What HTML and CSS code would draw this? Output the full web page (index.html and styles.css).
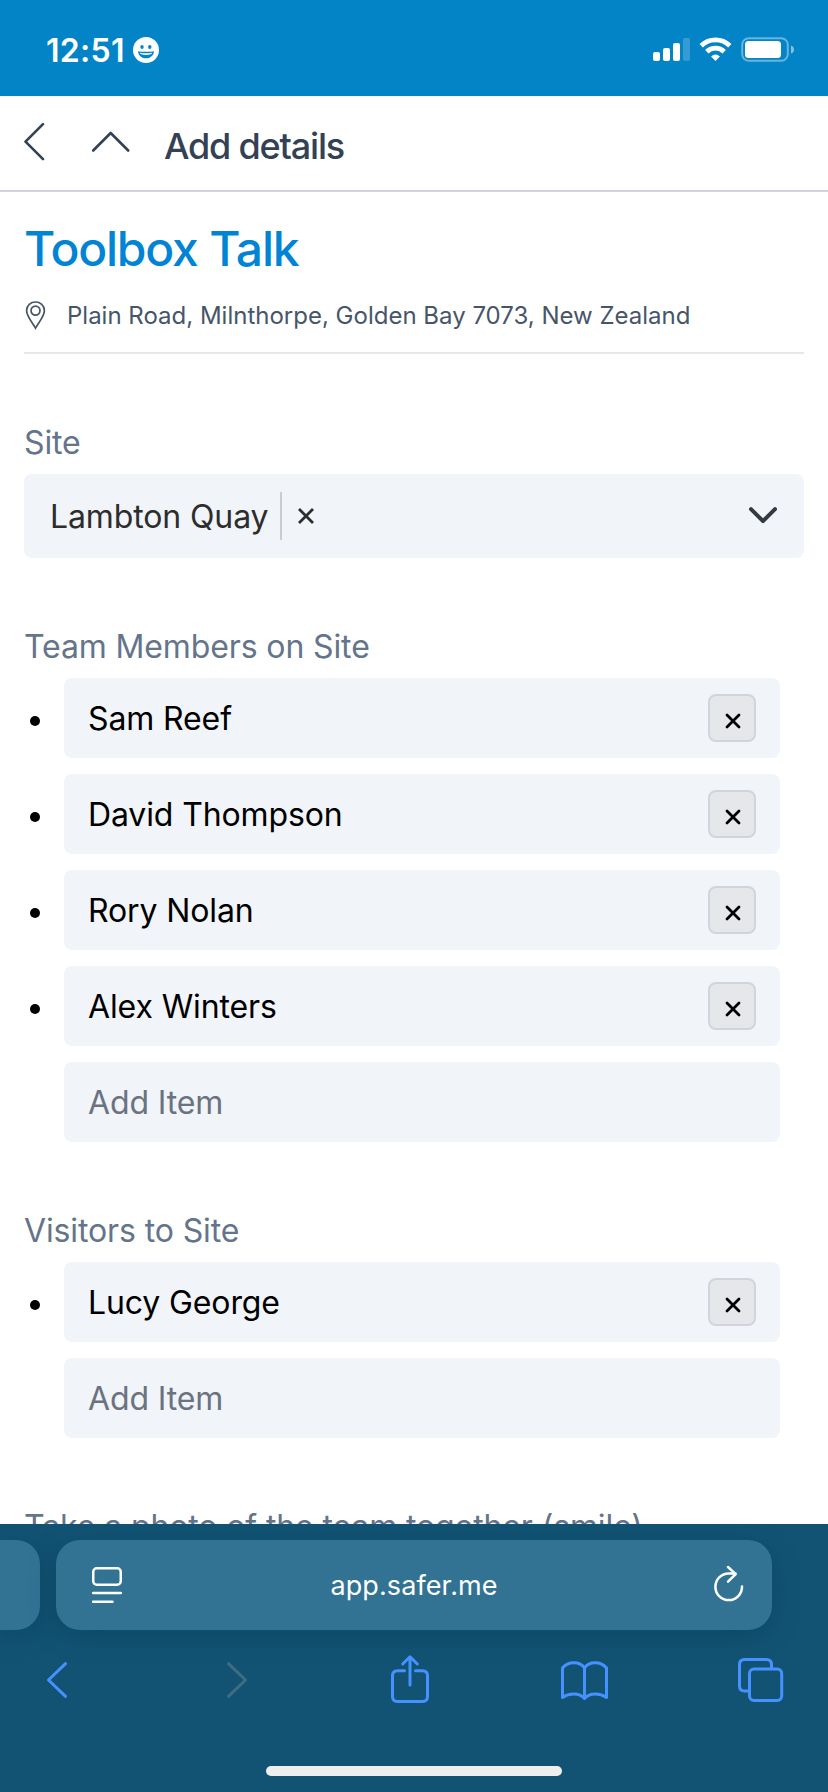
FILE: index.html
```html
<!DOCTYPE html>
<html lang="en">
<head>
<meta charset="utf-8">
<title>Toolbox Talk</title>
<link rel="stylesheet" href="styles.css">
</head>
<body>
<div class="screen">
  <div class="status-bar">
    <span class="clock">12:51</span>
    <svg class="face" width="26" height="26" viewBox="0 0 26 26">
      <circle cx="13" cy="13" r="13" fill="#fff"/>
      <g fill="#0284c7"><ellipse cx="9" cy="9.9" rx="1.7" ry="2"/><ellipse cx="16.8" cy="9.9" rx="1.7" ry="2"/>
      <path d="M5 14.2C7.500 15 18.500 15 21 14.200C20.500 19 17 21.300 13 21.300S5.500 19 5 14.200Z"/></g>
      <path d="M6.700 15.700Q13 17 19.300 15.700Q18.800 17.700 13 17.900Q7.200 17.700 6.700 15.700Z" fill="#fff"/>
    </svg>
    <svg class="indicators" width="142" height="26" viewBox="0 0 142 26">
      <g fill="#fff"><rect y="15" width="7" height="9" rx="2"/><rect x="10" y="11" width="7" height="13" rx="2"/><rect x="20" y="6" width="7" height="18" rx="2"/><rect x="30" y="1" width="7" height="23" rx="2" opacity=".2"/></g>
      <g fill="none" stroke="#fff" stroke-width="4.700"><path d="M48.200 8.700A20.500 20.500 0 0 1 76.800 8.700"/><path d="M53.800 14.700A12.500 12.500 0 0 1 71.200 14.700"/></g>
      <path d="M62.500 24L58.100 19.500Q62.500 15.500 66.900 19.500Z" fill="#fff"/>
      <rect x="89.200" y="1.200" width="45.600" height="22.600" rx="6.500" fill="none" stroke="#fff" stroke-opacity=".4" stroke-width="2"/>
      <rect x="92" y="4" width="36" height="17" rx="3.500" fill="#fff"/>
      <path d="M138 8.500Q141 9.500 141 12.500T138 16.500Z" fill="#fff" opacity=".5"/>
    </svg>
  </div>

  <header class="nav">
    <svg class="nav-back" width="22" height="40" viewBox="0 0 22 40"><path d="M19 2.200L1.500 19.700L19 37.200"/></svg>
    <svg class="nav-up" width="40" height="22" viewBox="0 0 40 22"><path d="M2.200 19.500L19.700 2L37.200 19.500"/></svg>
    <h1 class="nav-title">Add details</h1>
  </header>

  <main class="content">
    <section class="intro">
      <h2 class="title">Toolbox Talk</h2>
      <div class="address">
        <svg class="pin" width="23" height="30" viewBox="0 0 23 30"><path d="M11.500 28.200C8.500 22.500 2.600 16.500 2.600 10.500C2.600 5.200 6.700 2 11.500 2S20.400 5.200 20.400 10.500C20.400 16.500 14.500 22.500 11.500 28.200Z"/><circle cx="11.500" cy="10.600" r="4.500"/></svg>
        <span class="address-text">Plain Road, Milnthorpe, Golden Bay 7073, New Zealand</span>
      </div>
    </section>

    <section class="field">
      <div class="label">Site</div>
      <div class="select">
        <span class="select-value">Lambton Quay</span>
        <svg class="clear" width="16" height="16" viewBox="0 0 16 16"><path d="M1 1L15 15M15 1L1 15"/></svg>
        <svg class="caret" width="28" height="18" viewBox="0 0 28 18"><path d="M2 2.200L14 14.200L26 2.200"/></svg>
      </div>
    </section>

    <section class="field">
      <div class="label">Team Members on Site</div>
      <ul class="items">
        <li class="item"><div class="box"><span>Sam Reef</span><button class="remove"><svg width="16" height="16" viewBox="0 0 16 16"><path d="M2 2L14 14M14 2L2 14"/></svg></button></div></li>
        <li class="item"><div class="box"><span>David Thompson</span><button class="remove"><svg width="16" height="16" viewBox="0 0 16 16"><path d="M2 2L14 14M14 2L2 14"/></svg></button></div></li>
        <li class="item"><div class="box"><span>Rory Nolan</span><button class="remove"><svg width="16" height="16" viewBox="0 0 16 16"><path d="M2 2L14 14M14 2L2 14"/></svg></button></div></li>
        <li class="item"><div class="box"><span>Alex Winters</span><button class="remove"><svg width="16" height="16" viewBox="0 0 16 16"><path d="M2 2L14 14M14 2L2 14"/></svg></button></div></li>
        <li class="item item-new"><div class="box"><span>Add Item</span></div></li>
      </ul>
    </section>

    <section class="field">
      <div class="label">Visitors to Site</div>
      <ul class="items">
        <li class="item"><div class="box"><span>Lucy George</span><button class="remove"><svg width="16" height="16" viewBox="0 0 16 16"><path d="M2 2L14 14M14 2L2 14"/></svg></button></div></li>
        <li class="item item-new"><div class="box"><span>Add Item</span></div></li>
      </ul>
    </section>

    <section class="field">
      <div class="label">Take a photo of the team together (smile)</div>
    </section>
  </main>

  <footer class="browser">
    <div class="tabs">
      <div class="tab-prev"></div>
      <div class="tab">
        <svg width="30" height="36" viewBox="0 0 30 36"><rect x="1.250" y="1.250" width="27.500" height="16.500" rx="3.500"/><path d="M1 26H29M1 34.700H20.500"/></svg>
        <span class="url">app.safer.me</span>
        <svg class="reload" width="30" height="37" viewBox="0 0 30 37"><path d="M28 21.500A13.300 13.300 0 1 1 14.700 8.500H21.500M14 2L21.700 9.200L14 16.700"/></svg>
      </div>
    </div>
    <div class="toolbar">
      <svg class="tool" viewBox="0 0 60 60"><path d="M37.500 13.700L20.500 30L37.500 46.300"/></svg>
      <svg class="tool tool-off" viewBox="0 0 60 60"><path d="M24.500 13.700L41.500 30L24.500 46.300"/></svg>
      <svg class="tool" viewBox="0 0 60 60"><path d="M24.500 20.700H17.500Q12.500 20.700 12.500 25.700V46.500Q12.500 51.500 17.500 51.500H42.500Q47.500 51.500 47.500 46.500V25.700Q47.500 20.700 42.500 20.700H35.500M30 35V7.500M22.700 14L30 6.800L37.300 14"/></svg>
      <svg class="tool" viewBox="0 0 60 60"><path d="M28.500 48.500V18C24 11 12 11 6.500 18V47.500C13 43 23 42.500 28.500 48.500C34 42.500 44 43 50.500 47.500V18C45 11 33 11 28.500 18"/></svg>
      <svg class="tool" viewBox="0 0 60 60"><path d="M16.500 41H12.500Q7.500 41 7.500 36V14.500Q7.500 9.500 12.500 9.500H34.500Q39.500 9.500 39.500 14.500V18.500"/><rect x="17.500" y="19" width="32.200" height="31.500" rx="4.500"/></svg>
    </div>
    <div class="home-indicator"></div>
  </footer>
</div>
</body>
</html>
```

FILE: styles.css
```css
* { box-sizing: border-box; }

body {
  margin: 0;
  background: #fff;
  font-family: Inter, "Liberation Sans", sans-serif;
}

svg { display: block; flex: none; }

.screen {
  display: flex;
  flex-direction: column;
  width: 828px;
  height: 1792px;
  overflow: hidden;
}

/* Status bar */
.status-bar {
  display: flex;
  flex: none;
  align-items: flex-start;
  height: 96px;
  padding: 37px 33px 0 46px;
  background: #0284c7;
  color: #fff;
}

.clock {
  width: 87px;
  font-size: 32px;
  font-weight: 600;
  line-height: 27px;
  letter-spacing: 0.3px;
  white-space: nowrap;
}

.indicators { margin-left: auto; }

/* Page navigation */
.nav {
  display: flex;
  flex: none;
  align-items: flex-start;
  height: 96px;
  padding: 26px 24px 0;
  border-bottom: 2px solid #d1d5db;
}

.nav svg {
  fill: none;
  stroke: #334155;
  stroke-width: 2.6;
  stroke-linecap: round;
  stroke-linejoin: round;
}

.nav-up { margin: 9px 0 0 45px; }

.nav-title {
  margin: 2px 0 0 33px;
  color: #334155;
  font-size: 36px;
  font-weight: 500;
  line-height: 44px;
  letter-spacing: -1.2px;
}

/* Form */
.content {
  display: flex;
  flex: 1;
  flex-direction: column;
  gap: 64px;
  min-height: 0;
  padding: 27px 24px 0;
  overflow: hidden;
}

.intro {
  flex: none;
  height: 135px;
  border-bottom: 2px solid #e5e7eb;
}

.title {
  margin: 0;
  color: #0284d4;
  font-size: 48px;
  font-weight: 500;
  line-height: 60px;
  letter-spacing: -1.2px;
}

.address {
  display: flex;
  align-items: center;
  gap: 20px;
  margin-top: 20px;
  color: #475569;
  font-size: 24px;
  line-height: 32px;
}

.address-text { padding-top: 2px; line-height: 30px; }

.pin { fill: none; stroke: #475569; stroke-width: 1.7; }

.field { flex: none; }

.label {
  height: 48px;
  margin-bottom: 8px;
  color: #64748b;
  font-size: 32px;
  line-height: 50px;
  letter-spacing: -0.12px;
}

.select {
  display: flex;
  align-items: center;
  height: 84px;
  padding: 0 27px 0 26px;
  border-radius: 8px;
  background: #f1f4f9;
  color: #2d2d2d;
  font-size: 32px;
  letter-spacing: -0.12px;
}

.select-value {
  width: 232px;
  height: 48px;
  border-right: 2px solid #cccccc;
  line-height: 50px;
}

.clear { margin-left: 16px; fill: none; stroke: #2d2d2d; stroke-width: 2.8; }

.caret {
  margin-left: auto;
  fill: none;
  stroke: #343a40;
  stroke-width: 4;
  stroke-linecap: round;
  stroke-linejoin: round;
}

.items {
  display: flex;
  flex-direction: column;
  gap: 16px;
  margin: 0;
  padding: 0 24px 0 6px;
  list-style: none;
}

.item {
  display: flex;
  align-items: center;
  gap: 24px;
}

.item::before {
  width: 10px;
  height: 10px;
  margin-top: 6px;
  border-radius: 50%;
  background: #000;
  content: "";
}

.item-new::before { background: none; }

.box {
  display: flex;
  flex: 1;
  align-items: center;
  justify-content: space-between;
  height: 80px;
  padding: 0 24px;
  border-radius: 8px;
  background: #f1f4f9;
  color: #000;
  font-size: 32px;
  line-height: 48px;
  letter-spacing: -0.12px;
}

.box span { padding-top: 2px; }

.item-new .box { color: #6b7280; }

.remove {
  display: flex;
  align-items: center;
  justify-content: center;
  width: 48px;
  height: 48px;
  padding: 6px 0 0 1px;
  border: 2px solid #d1d5db;
  border-radius: 8px;
  background: #e5e7eb;
}

.remove svg { stroke: #000; stroke-width: 2.8; stroke-linecap: round; }

/* Browser chrome */
.browser {
  flex: none;
  height: 268px;
  padding-top: 16px;
  background: #125373;
}

.tabs { display: flex; gap: 16px; height: 90px; }

.tab-prev,
.tab {
  background: #327394;
  box-shadow: 0 6px 28px rgba(0, 50, 80, 0.32);
}

.tab-prev { width: 40px; border-radius: 0 24px 24px 0; }

.tab {
  display: flex;
  align-items: center;
  justify-content: space-between;
  width: 716px;
  padding: 0 28px 0 36px;
  border-radius: 24px;
}

.tab svg {
  fill: none;
  stroke: #fff;
  stroke-width: 2.5;
  stroke-linecap: round;
  stroke-linejoin: round;
}

.tab .reload { margin-bottom: 4px; }

.url {
  margin-right: 8px;
  color: #fff;
  font-size: 27px;
  letter-spacing: 0.1px;
}

.toolbar {
  display: flex;
  justify-content: space-between;
  margin-top: 20px;
  padding: 0 36px 0 28px;
}

.tool {
  width: 60px;
  height: 60px;
  fill: none;
  stroke: #4591ff;
  stroke-width: 3;
  stroke-linecap: round;
  stroke-linejoin: round;
}

.tool-off { stroke: #426b80; }

.home-indicator {
  width: 296px;
  height: 10px;
  margin: 56px auto 0;
  border-radius: 5px;
  background: #eee;
}
```
